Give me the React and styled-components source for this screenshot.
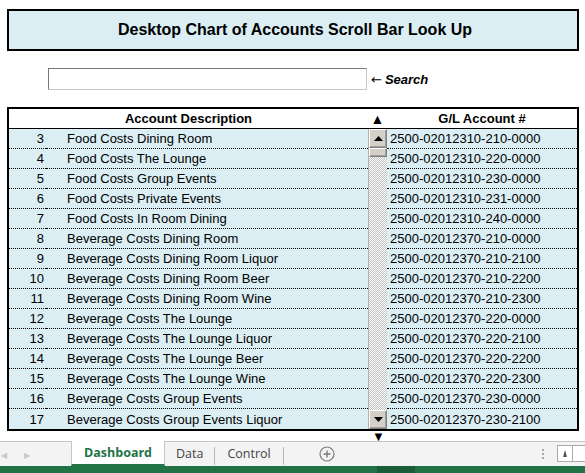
import React from 'react';
import styled, { createGlobalStyle } from 'styled-components';

const GlobalStyle = createGlobalStyle`
  html, body { margin: 0; padding: 0; background: #fff; }
  body { font-family: "Liberation Sans", Arial, sans-serif; color: #000; }
  * { box-sizing: border-box; }
`

const Page = styled.div`
  width: 585px;
  height: 473px;
  display: flex;
  flex-direction: column;
  overflow: hidden;
`

const TitleBox = styled.div`
  margin: 9px 6px 0 7px;
  height: 42px;
  border: 2px solid #000;
  background: #daeef3;
  display: flex;
  align-items: center;
  justify-content: center;
  font-weight: bold;
  font-size: 16px;
  padding-left: 4px;
`

const SearchRow = styled.div`
  margin-top: 17px;
  padding-left: 48px;
  display: flex;
  align-items: center;
  gap: 4px;
`

const SearchInput = styled.input`
  width: 319px;
  height: 22px;
  border: 1px solid #c8c8c8;
  border-top-color: #7a7a7a;
  border-left-color: #7a7a7a;
  outline: none;
  padding: 0 3px;
  font: inherit;
`

const SearchLabel = styled.span`
  font-size: 13px;
  font-weight: bold;
  font-style: italic;
  display: flex;
  align-items: center;
  gap: 3px;
  span {
    font-family: "DejaVu Sans", sans-serif;
    font-style: normal;
    font-weight: normal;
    font-size: 13px;
  }
`

const Table = styled.div`
  margin: 17px 6px 0 7px;
  border: 2px solid #000;
`

const HeaderRow = styled.div`
  display: grid;
  grid-template-columns: 359px 19px 1fr;
  height: 20px;
  border-bottom: 1px solid #000;
  font-weight: bold;
  font-size: 13px;
  align-items: center;
  text-align: center;
  background: #fff;
`

const Arrow = styled.span`
  font-size: ${p => p.$size || 12}px;
  line-height: 1;
`

const Body = styled.div`
  display: grid;
  grid-template-columns: 37px 322px 19px 1fr;
  grid-auto-rows: 20px;
  background: #daeef3;
  font-size: 13px;
`

const Cell = styled.div`
  display: flex;
  align-items: center;
  white-space: nowrap;
  overflow: hidden;
  border-bottom: ${p => (p.$last ? 'none' : '1px dotted #000')};
  grid-column: ${p => p.$col};
  justify-content: ${p => (p.$right ? 'flex-end' : 'flex-start')};
  padding-left: ${p => p.$pl || 0}px;
  padding-right: ${p => p.$pr || 0}px;
`

const ScrollBar = styled.div`
  grid-column: 3;
  grid-row: 1 / span 15;
  display: flex;
  flex-direction: column;
  background: repeating-conic-gradient(#c4c4c4 0 25%, #fafafa 0 50%) 0 0 / 2px 2px;
  border-left: 1px solid #b0b0b0;
`

const ScrollButton = styled.div`
  height: ${p => p.$h || 19}px;
  background: #d4d0c8;
  border: 1px solid;
  border-color: #fff #808080 #808080 #fff;
  box-shadow: inset -1px -1px 0 #a0a0a0;
  display: flex;
  align-items: center;
  justify-content: center;
`

const Track = styled.div`
  flex: 1;
`

const BelowRow = styled.div`
  height: 10px;
  padding-left: 372px;
  display: flex;
  align-items: center;
`

const TabBar = styled.div`
  height: 25px;
  background: #f3f3f3;
  border-top: 1px solid #c6c6c6;
  display: flex;
  align-items: stretch;
  font-family: "Open Sans", "Liberation Sans", sans-serif;
  font-size: 12.5px;
  color: #444;
`

const NavArrows = styled.div`
  width: 71px;
  display: flex;
  align-items: center;
  gap: 17px;
  padding-left: 1px;
  color: #c8c8c8;
  font-size: 8px;
`

const Tab = styled.div`
  display: flex;
  align-items: center;
  padding: 0 ${p => p.$pad || 12}px;
  background: ${p => (p.$active ? '#fff' : 'transparent')};
  color: ${p => (p.$active ? '#217346' : '#444')};
  font-weight: ${p => (p.$active ? 'bold' : 'normal')};
  border-left: ${p => (p.$active ? '1px solid #c6c6c6' : 'none')};
  border-right: 1px solid ${p => (p.$active ? '#c6c6c6' : '#b8b8b8')};
  border-bottom: 2px solid ${p => (p.$active ? '#217346' : 'transparent')};
  margin-top: ${p => (p.$active ? -1 : 5)}px;
  padding-bottom: ${p => (p.$active ? 0 : 5)}px;
`

const AddButton = styled.div`
  margin-left: 35px;
  display: flex;
  align-items: center;
`

const Spacer = styled.div`
  flex: 1;
`

const Dots = styled.div`
  display: flex;
  flex-direction: column;
  justify-content: center;
  gap: 2px;
  margin-right: 13px;
  span {
    width: 2px;
    height: 2px;
    background: #a8a8a8;
  }
`

const HScroll = styled.div`
  margin-top: 3px;
  height: 17px;
  width: 28px;
  display: flex;
  border: 1px solid #ababab;
  border-right: none;
  background: #fff;
`

const HScrollBtn = styled.div`
  width: 15px;
  border-right: 1px solid #ababab;
  display: flex;
  align-items: center;
  justify-content: center;
`

const StatusBar = styled.div`
  height: 7px;
  background: #217346;
  display: flex;
  padding-left: 377px;
  div {
    width: 38px;
    background: #1a5c38;
  }
`

const Tri = ({ down, w = 9, h = 5, color = '#000' }) => (
  <svg width={w} height={h} viewBox={`0 0 ${w} ${h}`}>
    <polygon
      points={down ? `0,0 ${w},0 ${w / 2},${h}` : `0,${h} ${w},${h} ${w / 2},0`}
      fill={color}
    />
  </svg>
)

const rows = [
  [3, 'Food Costs Dining Room', '2500-02012310-210-0000'],
  [4, 'Food Costs The Lounge', '2500-02012310-220-0000'],
  [5, 'Food Costs Group Events', '2500-02012310-230-0000'],
  [6, 'Food Costs Private Events', '2500-02012310-231-0000'],
  [7, 'Food Costs In Room Dining', '2500-02012310-240-0000'],
  [8, 'Beverage Costs Dining Room', '2500-02012370-210-0000'],
  [9, 'Beverage Costs Dining Room Liquor', '2500-02012370-210-2100'],
  [10, 'Beverage Costs Dining Room Beer', '2500-02012370-210-2200'],
  [11, 'Beverage Costs Dining Room Wine', '2500-02012370-210-2300'],
  [12, 'Beverage Costs The Lounge', '2500-02012370-220-0000'],
  [13, 'Beverage Costs The Lounge Liquor', '2500-02012370-220-2100'],
  [14, 'Beverage Costs The Lounge Beer', '2500-02012370-220-2200'],
  [15, 'Beverage Costs The Lounge Wine', '2500-02012370-220-2300'],
  [16, 'Beverage Costs Group Events', '2500-02012370-230-0000'],
  [17, 'Beverage Costs Group Events Liquor', '2500-02012370-230-2100'],
]

const App = () => {
  return (
    <>
      <GlobalStyle />
      <Page>
        <TitleBox>Desktop Chart of Accounts Scroll Bar Look Up</TitleBox>

        <SearchRow>
          <SearchInput />
          <SearchLabel><span>←</span>Search</SearchLabel>
        </SearchRow>

        <Table>
          <HeaderRow>
            <div>Account Description</div>
            <Arrow $size={14}>▲</Arrow>
            <div>G/L Account #</div>
          </HeaderRow>
          <Body>
            <ScrollBar>
              <ScrollButton><Tri /></ScrollButton>
              <ScrollButton $h={9} />
              <Track />
              <ScrollButton><Tri down /></ScrollButton>
            </ScrollBar>
            {rows.map(([n, desc, gl], i) => {
              const last = i === rows.length - 1
              return (
                <React.Fragment key={n}>
                  <Cell $col={1} $right $pr={2} $last={last}>{n}</Cell>
                  <Cell $col={2} $pl={21} $last={last}>{desc}</Cell>
                  <Cell $col={4} $pl={3} $last={last}>{gl}</Cell>
                </React.Fragment>
              )
            })}
          </Body>
        </Table>

        <BelowRow>
          <Arrow $size={13}>▼</Arrow>
        </BelowRow>

        <TabBar>
          <NavArrows>
            <span>◀</span>
            <span>▶</span>
          </NavArrows>
          <Tab $active $pad={12}>Dashboard</Tab>
          <Tab $pad={11}>Data</Tab>
          <Tab $pad={12}>Control</Tab>
          <AddButton>
            <svg width="16" height="16" viewBox="0 0 16 16">
              <circle cx="8" cy="8" r="7" fill="none" stroke="#7a7a7a" strokeWidth="1.2" />
              <path d="M8 4.5v7M4.5 8h7" stroke="#7a7a7a" strokeWidth="1.4" />
            </svg>
          </AddButton>
          <Spacer />
          <Dots><span /><span /><span /></Dots>
          <HScroll>
            <HScrollBtn><Tri w={4} h={7} color="#555" /></HScrollBtn>
          </HScroll>
        </TabBar>
        <StatusBar><div /></StatusBar>
      </Page>
    </>
  );
}

export default App;
